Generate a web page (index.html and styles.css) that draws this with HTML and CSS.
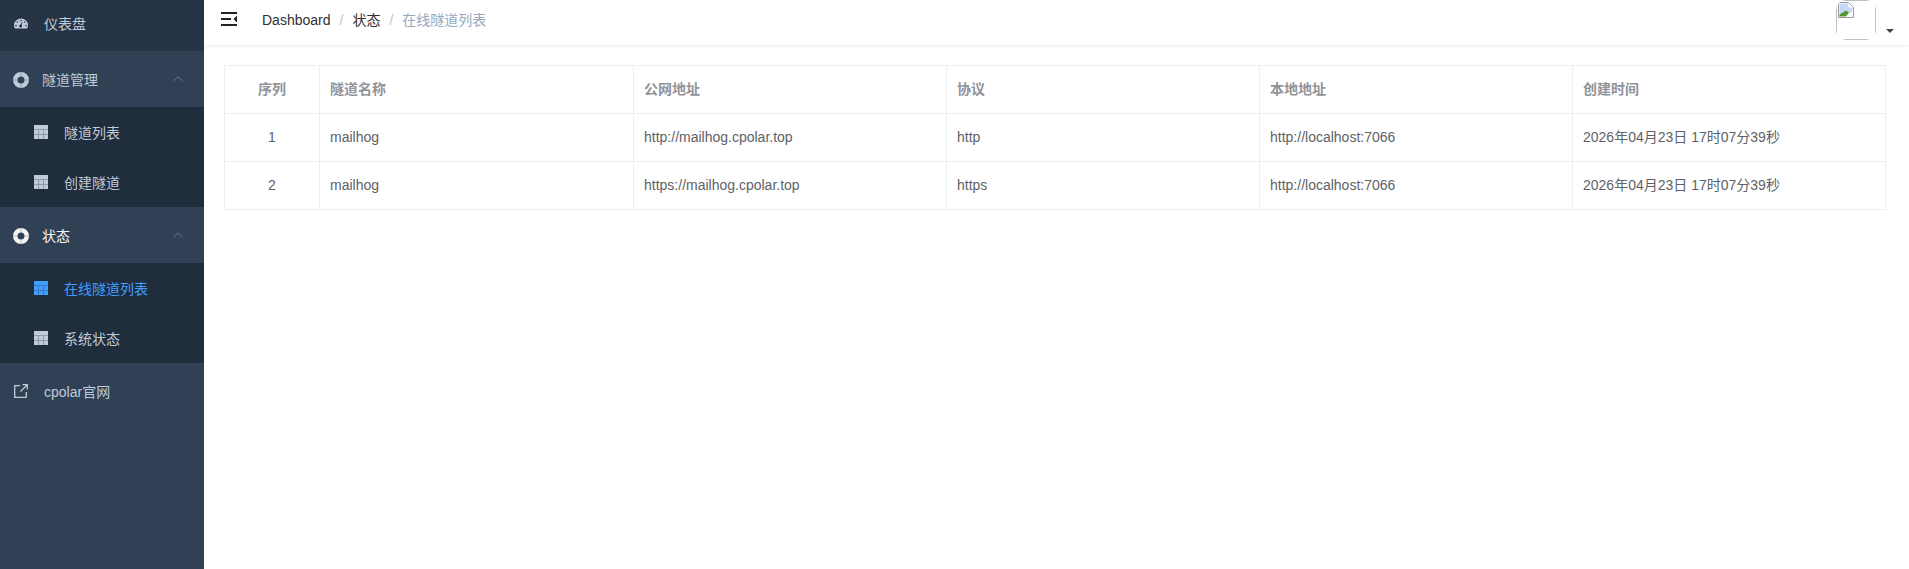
FILE: index.html
```html
<!DOCTYPE html>
<html lang="zh-CN">
<head>
<meta charset="utf-8">
<title>在线隧道列表</title>
<link rel="stylesheet" href="styles.css">
</head>
<body>
<div class="app">
  <aside class="sidebar">
    <a class="item first">
      <svg class="ico gauge" viewBox="0 0 14 14"><path fill="currentColor" fill-rule="evenodd" d="M7 1.500a7 6.800 0 0 1 7 6.800c0 1.200-.3 2.300-.9 3.200H.9C.3 10.600 0 9.500 0 8.300A7 6.800 0 0 1 7 1.500zM7 2.800a.8.800 0 1 0 0 1.600.8.800 0 0 0 0-1.600zM3.400 4.200a.8.800 0 1 0 0 1.600.8.800 0 0 0 0-1.600zM10.600 4.200a.8.800 0 1 0 0 1.600.8.800 0 0 0 0-1.600zM2 7.800a.8.800 0 1 0 0 1.600.8.800 0 0 0 0-1.600zM12 7.800a.8.800 0 1 0 0 1.600.8.800 0 0 0 0-1.600zM8.600 4.400L6.300 7.700a1.400 1.400 0 1 0 1.400.5z"/></svg>
      <span class="label">仪表盘</span>
    </a>
    <a class="item title">
      <svg class="ico ring" viewBox="0 0 16 16"><path fill="currentColor" fill-rule="evenodd" d="M8 0a8 8 0 1 1 0 16A8 8 0 0 1 8 0zM8 4.500a3.500 3.500 0 1 0 0 7 3.500 3.500 0 0 0 0-7z"/><path class="seam" d="M8 0v4.500M8 11.500V16M0 8h4.500M11.500 8H16"/></svg>
      <span class="label">隧道管理</span>
      <svg class="arrow" viewBox="0 0 10 6"><path d="M.5 5L5 .8 9.500 5" fill="none" stroke="currentColor"/></svg>
    </a>
    <div class="sub">
      <a class="subitem"><svg class="tbl" viewBox="0 0 14 14"><path fill="currentColor" opacity=".7" d="M0 4h14v10H0z"/><path fill="currentColor" d="M0 0h14v4H0zM0 5h4v4H0zM5 5h4v4H5zM10 5h4v4h-4zM0 10h4v4H0zM5 10h4v4H5zM10 10h4v4h-4z"/></svg><span>隧道列表</span></a>
      <a class="subitem"><svg class="tbl" viewBox="0 0 14 14"><path fill="currentColor" opacity=".7" d="M0 4h14v10H0z"/><path fill="currentColor" d="M0 0h14v4H0zM0 5h4v4H0zM5 5h4v4H5zM10 5h4v4h-4zM0 10h4v4H0zM5 10h4v4H5zM10 10h4v4h-4z"/></svg><span>创建隧道</span></a>
    </div>
    <a class="item title open">
      <svg class="ico ring" viewBox="0 0 16 16"><path fill="currentColor" fill-rule="evenodd" d="M8 0a8 8 0 1 1 0 16A8 8 0 0 1 8 0zM8 4.500a3.500 3.500 0 1 0 0 7 3.500 3.500 0 0 0 0-7z"/><path class="seam" d="M8 0v4.500M8 11.500V16M0 8h4.500M11.500 8H16"/></svg>
      <span class="label">状态</span>
      <svg class="arrow" viewBox="0 0 10 6"><path d="M.5 5L5 .8 9.500 5" fill="none" stroke="currentColor"/></svg>
    </a>
    <div class="sub">
      <a class="subitem active"><svg class="tbl" viewBox="0 0 14 14"><path fill="currentColor" opacity=".7" d="M0 4h14v10H0z"/><path fill="currentColor" d="M0 0h14v4H0zM0 5h4v4H0zM5 5h4v4H5zM10 5h4v4h-4zM0 10h4v4H0zM5 10h4v4H5zM10 10h4v4h-4z"/></svg><span>在线隧道列表</span></a>
      <a class="subitem"><svg class="tbl" viewBox="0 0 14 14"><path fill="currentColor" opacity=".7" d="M0 4h14v10H0z"/><path fill="currentColor" d="M0 0h14v4H0zM0 5h4v4H0zM5 5h4v4H5zM10 5h4v4h-4zM0 10h4v4H0zM5 10h4v4H5zM10 10h4v4h-4z"/></svg><span>系统状态</span></a>
    </div>
    <a class="item">
      <svg class="ico" viewBox="0 0 14 14"><path d="M6 1.700H.7v11.600h11.600V8M8.500.7h4.800v4.800M13 1L6.500 7.500" fill="none" stroke="currentColor" stroke-width="1.300"/></svg>
      <span class="label">cpolar官网</span>
    </a>
  </aside>
  <main class="main">
    <header class="navbar">
      <svg class="hamburger" viewBox="0 0 16 14"><path fill="#222" d="M0 0h16v2H0zM0 6h10v2H0zM0 12h16v2H0zM16 3.500v7L12.500 7z"/></svg>
      <nav class="crumbs">
        <span class="link">Dashboard</span><span class="sep">/</span><span class="link">状态</span><span class="sep">/</span><span class="current">在线隧道列表</span>
      </nav>
      <div class="avatar">
        <div class="frame">
          <svg class="broken" viewBox="0 0 16 16"><path fill="#fff" stroke="#9a9a9a" d="M.5.500h10l5 5v10H.5z"/><path fill="#c7d9f5" d="M1.500 1.500h9v4h4v5l-13 2z"/><path fill="#4f9a2e" d="M1.500 14.500v-2L8 8.500l3 2-3 4z"/><path fill="#fff" d="M10 15l5-6v2l-3 4z"/></svg>
        </div>
      </div>
      <i class="caret"></i>
    </header>
    <section class="content">
      <table class="grid">
        <colgroup><col class="c0"><col class="c1"><col class="c2"><col class="c2"><col class="c2"><col class="c2"></colgroup>
        <thead>
          <tr><th class="center">序列</th><th>隧道名称</th><th>公网地址</th><th>协议</th><th>本地地址</th><th>创建时间</th></tr>
        </thead>
        <tbody>
          <tr><td class="center">1</td><td>mailhog</td><td>http://mailhog.cpolar.top</td><td>http</td><td>http://localhost:7066</td><td class="date">2026年04月23日 17时07分39秒</td></tr>
          <tr><td class="center">2</td><td>mailhog</td><td>https://mailhog.cpolar.top</td><td>https</td><td>http://localhost:7066</td><td class="date">2026年04月23日 17时07分39秒</td></tr>
        </tbody>
      </table>
    </section>
  </main>
</div>
</body>
</html>
```
FILE: styles.css
```css
* { box-sizing: border-box; }
html, body { margin: 0; height: 100%; }
body {
  font-family: "Liberation Sans", "Noto Sans CJK SC", sans-serif;
  font-size: 14px;
  color: #606266;
  background: #fff;
  overflow: hidden;
}
.app { display: flex; height: 100vh; }
.sidebar { width: 204px; flex: none; background: #304156; color: #bfcbd9; }
.item { display: flex; align-items: center; height: 56px; padding-left: 14px; position: relative; }
.item.first { height: 51px; padding-bottom: 5px; background: #263445; }
.item.open { color: #f4f4f5; }
.ico { width: 14px; height: 14px; flex: none; }
.gauge { margin-top: 1px; }
.ring { width: 16px; height: 16px; margin: 2px 0 0 -1px; }
.seam { stroke: #304156; stroke-width: .5; opacity: .6; fill: none; }
.label { margin-left: 16px; }
.ring + .label { margin-left: 13px; }
.arrow { position: absolute; right: 21px; top: 25px; width: 10px; height: 6px; color: #6a7889; }
.sub { background: #1f2d3d; }
.subitem { display: flex; align-items: center; height: 50px; padding-left: 34px; }
.subitem span { margin-left: 16px; }
.tbl { width: 14px; height: 14px; flex: none; }
.subitem.active { color: #409eff; }
.main { flex: 1; min-width: 0; display: flex; flex-direction: column; }
.navbar {
  height: 45px;
  flex: none;
  display: flex;
  align-items: flex-start;
  padding-left: 17px;
  position: relative;
  box-shadow: 0 1px 4px rgba(0, 21, 41, .08);
}
.hamburger { width: 16px; height: 14px; margin-top: 12px; flex: none; }
.crumbs { margin-left: 25px; line-height: 40px; }
.link { color: #303133; }
.sep { margin: 0 9px; color: #c0c4cc; }
.current { color: #97a8be; }
.avatar { position: absolute; right: 33px; top: 0; width: 40px; height: 40px; border-radius: 10px; overflow: hidden; }
.frame { width: 100%; height: 100%; border: 1px solid #c0c0c0; padding: 1px; }
.broken { display: block; width: 16px; height: 16px; }
.caret { position: absolute; right: 15px; top: 29px; width: 0; height: 0; border: 4px solid transparent; border-top: 4px solid #444; border-bottom: 0; }
.content { padding: 20px 23px 0 20px; }
.grid { width: 1661px; table-layout: fixed; border-collapse: collapse; border: 1px solid #ebeef5; }
.c0 { width: 95px; }
.c1 { width: 314px; }
.c2 { width: 313px; }
th, td { height: 48px; padding: 0 10px 2px; border: 1px solid #ebeef5; text-align: left; }
th { font-weight: 700; color: #909399; padding-bottom: 4px; }
.date { padding-bottom: 4px; }
.center { text-align: center; }
```
